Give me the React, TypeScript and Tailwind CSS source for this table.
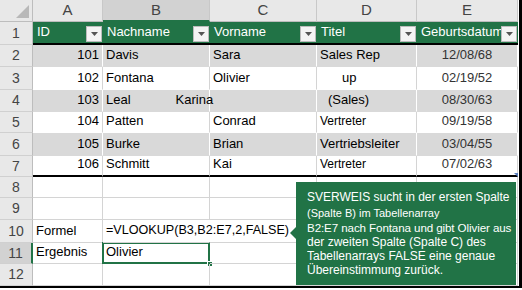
import type { ReactNode } from 'react'

const colW = ['w-[70px]', 'w-[107px]', 'w-[107px]', 'w-[100px]', 'w-[101px]']
const letters = ['A', 'B', 'C', 'D', 'E']
const rowH = [
  'h-[23px]',
  'h-[22px]',
  'h-[23px]',
  'h-[22px]',
  'h-[21px]',
  'h-[23px]',
  'h-[21px]',
  'h-[21px]',
  'h-[22px]',
  'h-[23px]',
  'h-[21px]',
  'h-[22px]'
]

type CellSpec = {
  text?: ReactNode
  className?: string
}

function FilterButton(): React.JSX.Element {
  return (
    <div className="absolute right-[1px] top-[4px] flex h-[16px] w-[16px] items-center justify-center border border-[#bcbcbc] bg-[#f4f4f4]">
      <svg width="7" height="4" viewBox="0 0 7 4">
        <path d="M0 0h7L3.5 4z" fill="#555" />
      </svg>
    </div>
  )
}

function RowHeader({ n, h, selected }: { n: number; h: string; selected?: boolean }): React.JSX.Element {
  return (
    <div
      className={`flex w-[33px] shrink-0 items-center justify-center border-b border-[#d0d0d0] text-[14px] text-[#444] ${h} ${
        selected ? 'border-r-2 border-r-[#217346] bg-[#d2d2d2]' : 'border-r border-r-[#bdbdbd] bg-[#e8e8e8]'
      }`}
    >
      {n}
    </div>
  )
}

// data rows 2..7
const tableRows: CellSpec[][] = [
  [{ text: '101', className: 'justify-end' }, { text: 'Davis' }, { text: 'Sara' }, { text: 'Sales Rep' }, { text: '12/08/68', className: 'justify-center text-[#333]' }],
  [{ text: '102', className: 'justify-end' }, { text: 'Fontana' }, { text: 'Olivier' }, { text: 'up', className: 'pl-[25px] pb-[0px]' }, { text: '02/19/52', className: 'justify-center text-[#333]' }],
  [
    { text: '103', className: 'justify-end' },
    {
      text: (
        <>
          <span>Leal</span>
          <span className="ml-[45px]">Karina</span>
        </>
      ),
      className: 'z-10 overflow-visible border-r-transparent'
    },
    { text: '' },
    { text: '(Sales)', className: 'pl-[11px]' },
    { text: '08/30/63', className: 'justify-center text-[#333]' }
  ],
  [{ text: '104', className: 'justify-end' }, { text: 'Patten' }, { text: 'Conrad' }, { text: 'Vertreter', className: 'text-[12px]' }, { text: '09/19/58', className: 'justify-center text-[#333]' }],
  [{ text: '105', className: 'justify-end' }, { text: 'Burke' }, { text: 'Brian' }, { text: 'Vertriebsleiter' }, { text: '03/04/55', className: 'justify-center text-[#333]' }],
  [{ text: '106', className: 'justify-end' }, { text: 'Schmitt' }, { text: 'Kai' }, { text: 'Vertreter', className: 'text-[12px]' }, { text: '07/02/63', className: 'justify-center text-[#333]' }]
]

export default function App(): React.JSX.Element {
  return (
    <div className="h-[290px] w-[522px] bg-white font-['Liberation_Sans',Arial,sans-serif] text-[13px] text-black">
      <div className="relative h-[288px] w-[522px] overflow-hidden border-b-2 border-r-[3px] border-black">
        {/* column letters */}
        <div className="flex h-[22px]">
          <div className="flex w-[33px] shrink-0 items-end justify-end border-b border-r border-[#bdbdbd] bg-[#e8e8e8] p-[3px]">
            <svg width="13" height="13" viewBox="0 0 13 13">
              <path d="M13 0v13H0z" fill="#b8b8b8" />
            </svg>
          </div>
          {letters.map((l, i) => (
            <div
              key={l}
              className={`flex shrink-0 items-center justify-center border-r border-[#c8c8c8] text-[15px] text-[#444] ${colW[i]} ${
                i === 1 ? 'border-b-2 border-b-[#217346] bg-[#d2d2d2]' : 'border-b border-b-[#bdbdbd] bg-[#e8e8e8]'
              }`}
            >
              {l}
            </div>
          ))}
        </div>

        {/* row 1 table header */}
        <div className="flex">
          <RowHeader n={1} h={rowH[0]} />
          {['ID', 'Nachname', 'Vorname', 'Titel', 'Geburtsdatum'].map((t, i) => (
            <div
              key={t}
              className={`relative flex shrink-0 items-end border-b-2 border-b-black bg-[#217346] pb-[2px] pl-[4px] text-white ${colW[i]} ${rowH[0]}`}
            >
              <span className="whitespace-nowrap">{t}</span>
              <FilterButton />
            </div>
          ))}
        </div>

        {/* rows 2..7 */}
        {tableRows.map((cells, r) => {
          const gray = r % 2 === 0
          return (
            <div key={r} className="flex">
              <RowHeader n={r + 2} h={rowH[r + 1]} />
              {cells.map((c, i) => (
                <div
                  key={i}
                  className={`relative flex shrink-0 items-end whitespace-nowrap px-[3px] pb-[2px] ${colW[i]} ${rowH[r + 1]} ${
                    gray ? 'border-r border-r-white bg-[#d9d9d9]' : 'border-r border-r-[#d4d4d4] bg-white'
                  } ${r === 5 ? 'border-b-2 border-b-black' : 'border-b border-b-transparent'} ${c.className ?? ''}`}
                >
                  {c.text}
                </div>
              ))}
            </div>
          )
        })}

        {/* rows 8..12 */}
        {[8, 9, 10, 11, 12].map((n) => (
          <div key={n} className="flex">
            <RowHeader n={n} h={rowH[n - 1]} selected={n === 11} />
            {letters.map((l, i) => {
              let content: ReactNode = null
              let extra = 'border-r-[#d4d4d4]'
              if (n === 10 && i === 0) content = 'Formel'
              if (n === 11 && i === 0) content = 'Ergebnis'
              if (n === 10 && i === 1) {
                content = <span className="text-[12.6px]">=VLOOKUP(B3,B2:E7,2,FALSE)</span>
                extra = 'border-r-transparent z-10'
              }
              return (
                <div
                  key={l}
                  className={`relative flex shrink-0 items-end whitespace-nowrap border-b border-r border-b-[#d4d4d4] px-[3px] pb-[2px] ${colW[i]} ${rowH[n - 1]} ${extra}`}
                >
                  {n === 11 && i === 1 ? (
                    <>
                      <span>Olivier</span>
                      <div className="absolute -left-[1px] -top-[1px] bottom-[-1px] right-[-1px] border-2 border-[#217346]" />
                      <div className="absolute bottom-[-4px] right-[-4px] h-[6px] w-[6px] border border-white bg-[#217346]" />
                    </>
                  ) : (
                    content
                  )}
                </div>
              )
            })}
          </div>
        ))}

        {/* table resize handle */}
        <div className="absolute left-[514px] top-[173px] h-0 w-0 border-l-[4px] border-t-[4px] border-l-transparent border-t-[#5b7fbf]" />

        {/* callout */}
        <div className="absolute left-[296px] top-[182px] h-[103px] w-[220px] bg-[#217346] pl-[11px] pt-[7px] text-[12px] text-white">
          <div className="absolute left-[-6px] top-[45px] h-0 w-0 border-y-[6px] border-r-[6px] border-y-transparent border-r-[#217346]" />
          <div className="h-full overflow-hidden">
            <div className="h-[16px] whitespace-nowrap leading-[16px]">SVERWEIS sucht in der ersten Spalte</div>
            <div className="h-[16px] whitespace-nowrap text-[11px] leading-[16px]">(Spalte B) im Tabellenarray</div>
            <div className="h-[14px] whitespace-nowrap text-[11.6px] tracking-[-0.1px] leading-[14px]">B2:E7 nach Fontana und gibt Olivier aus</div>
            <div className="h-[14px] whitespace-nowrap leading-[14px]">der zweiten Spalte (Spalte C) des</div>
            <div className="h-[14px] whitespace-nowrap leading-[14px]">Tabellenarrays FALSE eine genaue</div>
            <div className="h-[14px] whitespace-nowrap leading-[14px]">Übereinstimmung zurück.</div>
          </div>
        </div>
      </div>
    </div>
  )
}
